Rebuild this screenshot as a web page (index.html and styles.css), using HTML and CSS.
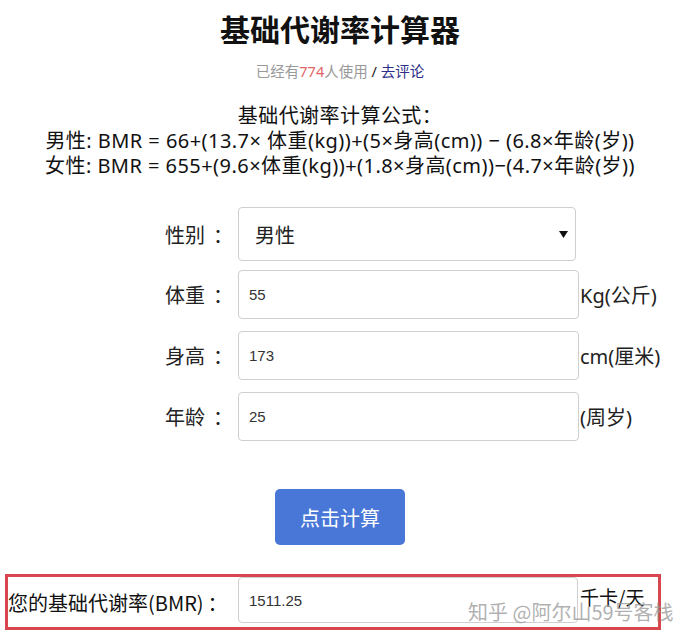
FILE: index.html
```html
<!DOCTYPE html>
<html lang="zh-CN">
<head>
    <meta charset="UTF-8">
    <meta name="viewport" content="width=device-width, initial-scale=1.0">
    <title>基础代谢率计算器</title>
    <link rel="stylesheet" href="styles.css">
</head>
<body>
    <div class="page">
        <h1 class="title">基础代谢率计算器</h1>
        <p class="meta">
            <span class="muted">已经有</span><span class="count">774</span><span class="muted">人使用</span>
            / <a href="#" class="comment">去评论</a>
        </p>

        <div class="formula">
            <div>基础代谢率计算公式：</div>
            <div>男性: BMR = 66+(13.7× 体重(kg))+(5×身高(cm)) − (6.8×年龄(岁))</div>
            <div>女性: BMR = 655+(9.6×体重(kg))+(1.8×身高(cm))−(4.7×年龄(岁))</div>
        </div>

        <form class="calc" id="bmrForm">
            <div class="row row-first">
                <label class="label" for="sex">性别<span class="colon">：</span></label>
                <div class="select-wrap">
                    <select id="sex" class="field select">
                        <option>男性</option>
                        <option>女性</option>
                    </select>
                    <svg class="arrow" width="9" height="7" viewBox="0 0 9 7"><path d="M0 0h9L4.5 7z" fill="#111"/></svg>
                </div>
                <span class="unit"></span>
            </div>
            <div class="row">
                <label class="label" for="weight">体重<span class="colon">：</span></label>
                <input class="field input" id="weight" type="text" value="55">
                <span class="unit">Kg(公斤)</span>
            </div>
            <div class="row">
                <label class="label" for="height">身高<span class="colon">：</span></label>
                <input class="field input" id="height" type="text" value="173">
                <span class="unit">cm(厘米)</span>
            </div>
            <div class="row">
                <label class="label" for="age">年龄<span class="colon">：</span></label>
                <input class="field input" id="age" type="text" value="25">
                <span class="unit">(周岁)</span>
            </div>

            <div class="actions">
                <button type="submit" class="btn">点击计算</button>
            </div>

            <div class="result">
                <label class="result-label" for="bmr">您的基础代谢率(BMR)<span class="colon">：</span></label>
                <input class="field input result-input" id="bmr" type="text" value="1511.25">
                <span class="result-unit">千卡/天</span>
                <span class="watermark">知乎 @阿尔山59号客栈</span>
            </div>
        </form>
    </div>
</body>
</html>
```
FILE: styles.css
```css
body {
    margin: 0;
    font-family: "Noto Sans", "Noto Sans CJK SC", sans-serif;
    color: #222;
    background-color: #fff;
}

.page {
    width: 680px;
}

.title {
    margin: 10px 0 0;
    font-size: 30px;
    line-height: 40px;
    text-align: center;
    color: #111;
}

.meta {
    margin: 11px 0 0;
    font-size: 14.5px;
    line-height: 20px;
    text-align: center;
    color: #222;
}

.muted {
    color: #999;
}

.count {
    color: #e06666;
}

.comment {
    color: #2d2d8a;
    text-decoration: none;
}

.formula {
    margin-top: 22px;
    font-size: 20px;
    line-height: 25px;
    letter-spacing: 0.45px;
    text-align: center;
    color: #111;
}

.calc {
    margin-top: 29px;
}

.row {
    display: grid;
    grid-template-columns: 238px 341px 1fr;
    align-items: center;
    margin-bottom: 12px;
}

.row-first {
    margin-bottom: 9px;
}

.label {
    text-align: right;
    padding-right: 5px;
    font-family: "Noto Sans CJK SC", sans-serif;
    font-size: 20px;
    color: #222;
}

/* the colon sits a bit away from the words */
.label .colon {
    margin-left: 8px;
}

.result-label .colon {
    margin-left: 4px;
}

.field {
    box-sizing: border-box;
    border: 1px solid #cfcfcf;
    border-radius: 4px;
    background-color: #fff;
    outline: none;
}

.select-wrap {
    position: relative;
    width: 338px;
}

.select {
    -webkit-appearance: none;
    appearance: none;
    width: 338px;
    height: 54px;
    padding: 0 0 0 16px;
    font-family: "Noto Sans CJK SC", sans-serif;
    font-size: 20px;
    color: #222;
}

.arrow {
    position: absolute;
    right: 8px;
    top: 24px;
}

.input {
    width: 341px;
    height: 49px;
    padding: 0 0 0 10px;
    font-family: "Liberation Sans", Arial, sans-serif;
    font-size: 15px;
    color: #333;
}

.unit {
    padding-left: 1px;
    font-size: 20px;
    color: #222;
}

.actions {
    display: flex;
    justify-content: center;
    margin-top: 48px;
}

.btn {
    width: 130px;
    height: 56px;
    border: none;
    border-radius: 5px;
    background-color: #4877d8;
    color: #fff;
    font-family: "Noto Sans CJK SC", sans-serif;
    font-size: 20px;
    cursor: pointer;
}

.result {
    position: relative;
    box-sizing: border-box;
    display: grid;
    grid-template-columns: 230px 340px 1fr;
    align-items: center;
    width: 656px;
    height: 56px;
    margin: 29px 0 0 5px;
    border: 3px solid #d8464f;
}

.result-label {
    font-family: "Noto Sans CJK SC", sans-serif;
    font-size: 20px;
    white-space: nowrap;
    color: #111;
}

.result-input {
    width: 340px;
    height: 46px;
    align-self: start;
}

.result-unit {
    align-self: start;
    padding: 6px 0 0 2px;
    font-family: "Noto Sans CJK SC", sans-serif;
    font-size: 19px;
    color: #111;
}

.watermark {
    position: absolute;
    left: 460px;
    top: 20px;
    font-family: "Noto Sans CJK SC", sans-serif;
    font-size: 20px;
    color: rgba(150, 150, 150, 0.75);
    white-space: nowrap;
    pointer-events: none;
}
```
